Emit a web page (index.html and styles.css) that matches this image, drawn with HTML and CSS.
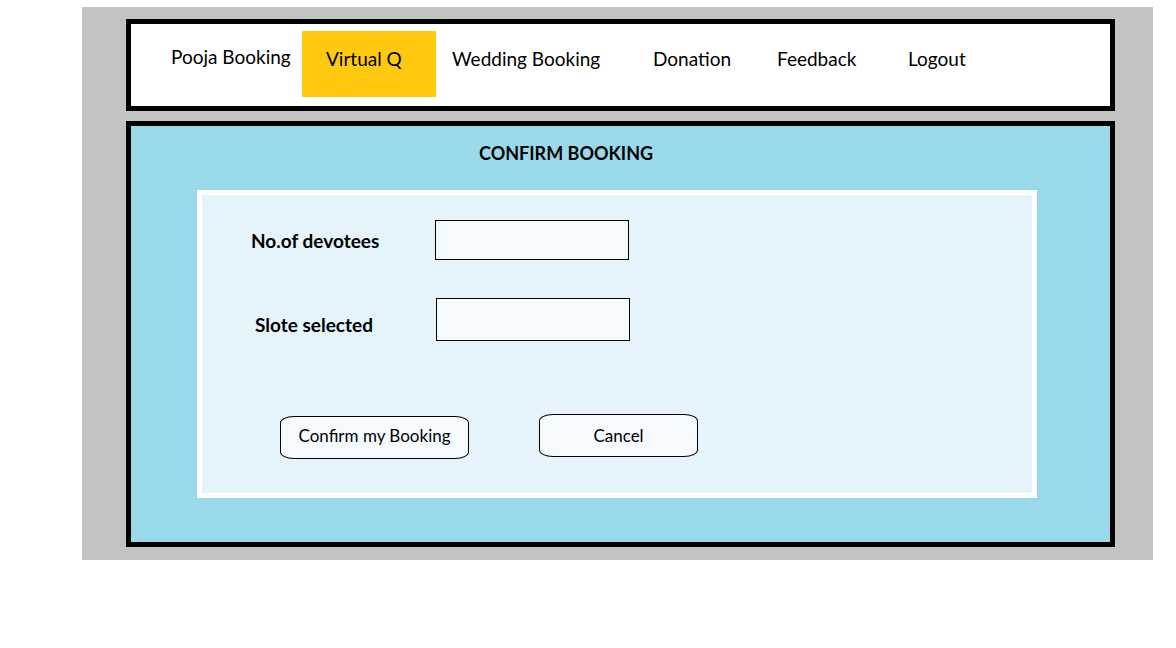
FILE: index.html
```html
<!DOCTYPE html>
<html>
<head>
<meta charset="utf-8">
<link rel="stylesheet" href="styles.css">
</head>
<body>
<div class="frame">
  <nav class="nav">
    <a class="nav-item pooja">Pooja Booking</a>
    <a class="nav-item virtual active">Virtual Q</a>
    <a class="nav-item wedding">Wedding Booking</a>
    <a class="nav-item donation">Donation</a>
    <a class="nav-item feedback">Feedback</a>
    <a class="nav-item logout">Logout</a>
  </nav>
  <main class="main">
    <h1 class="title">CONFIRM BOOKING</h1>
    <section class="panel">
      <div class="row row-one">
        <label class="label">No.of devotees</label>
        <div class="input input-one"></div>
      </div>
      <div class="row row-two">
        <label class="label label-two">Slote selected</label>
        <div class="input input-two"></div>
      </div>
      <div class="actions">
        <button class="btn btn-confirm">Confirm my Booking</button>
        <button class="btn btn-cancel">Cancel</button>
      </div>
    </section>
  </main>
</div>
</body>
</html>
```
FILE: styles.css
```css
* { box-sizing: border-box; }
body {
  margin: 0;
  background: #ffffff;
  font-family: "Lato", "Open Sans", sans-serif;
  color: #000;
}
.frame {
  margin: 7px 0 0 82px;
  width: 1071px;
  height: 553px;
  background: #c3c3c3;
  padding: 12px 38px 0 44px;
}
.nav {
  height: 92px;
  border: 5px solid #000;
  background: #fff;
  display: flex;
  align-items: flex-start;
  padding: 7px 0 0 40px;
}
.nav-item {
  font-size: 19px;
  line-height: 56px;
  height: 66px;
  white-space: nowrap;
}
.pooja { width: 131px; margin-top: -2px; }
.virtual { width: 134px; padding-left: 24px; margin-right: 16px; background: #fec90f; }
.wedding { width: 201px; }
.donation { width: 124px; }
.feedback { width: 131px; }
.main {
  margin-top: 10px;
  height: 426px;
  border: 5px solid #000;
  background: #9ad9e9;
  padding: 0 0 0 66px;
}
.title {
  margin: 0;
  padding: 15px 0 0 282px;
  height: 64px;
  font-size: 18px;
  line-height: 24px;
  font-weight: bold;
}
.panel {
  width: 840px;
  height: 308px;
  border: 5px solid #fff;
  background: #e5f4fa;
  padding: 25px 0 0 0;
}
.row {
  display: flex;
  align-items: center;
}
.row-one { padding-left: 49px; }
.row-two { padding-left: 53px; margin-top: 38px; }
.label {
  font-size: 19px;
  font-weight: bold;
  width: 184px;
}
.label-two { width: 181px; margin-top: 10px; }
.input {
  background: #f5fafe;
  border: 1px solid #000;
}
.input-one { width: 194px; height: 40px; }
.input-two { width: 194px; height: 43px; }
.actions {
  display: flex;
  align-items: flex-start;
  padding-left: 78px;
  margin-top: 73px;
}
.btn {
  font-family: "Lato", "Open Sans", sans-serif;
  font-size: 17px;
  color: #000;
  background: #f5fafe;
  border: 1px solid #000;
  border-radius: 14px / 7px;
  height: 43px;
  padding: 0;
}
.btn-confirm { width: 189px; margin-top: 2px; padding-bottom: 5px; }
.btn-cancel { width: 159px; margin-left: 70px; }
```
